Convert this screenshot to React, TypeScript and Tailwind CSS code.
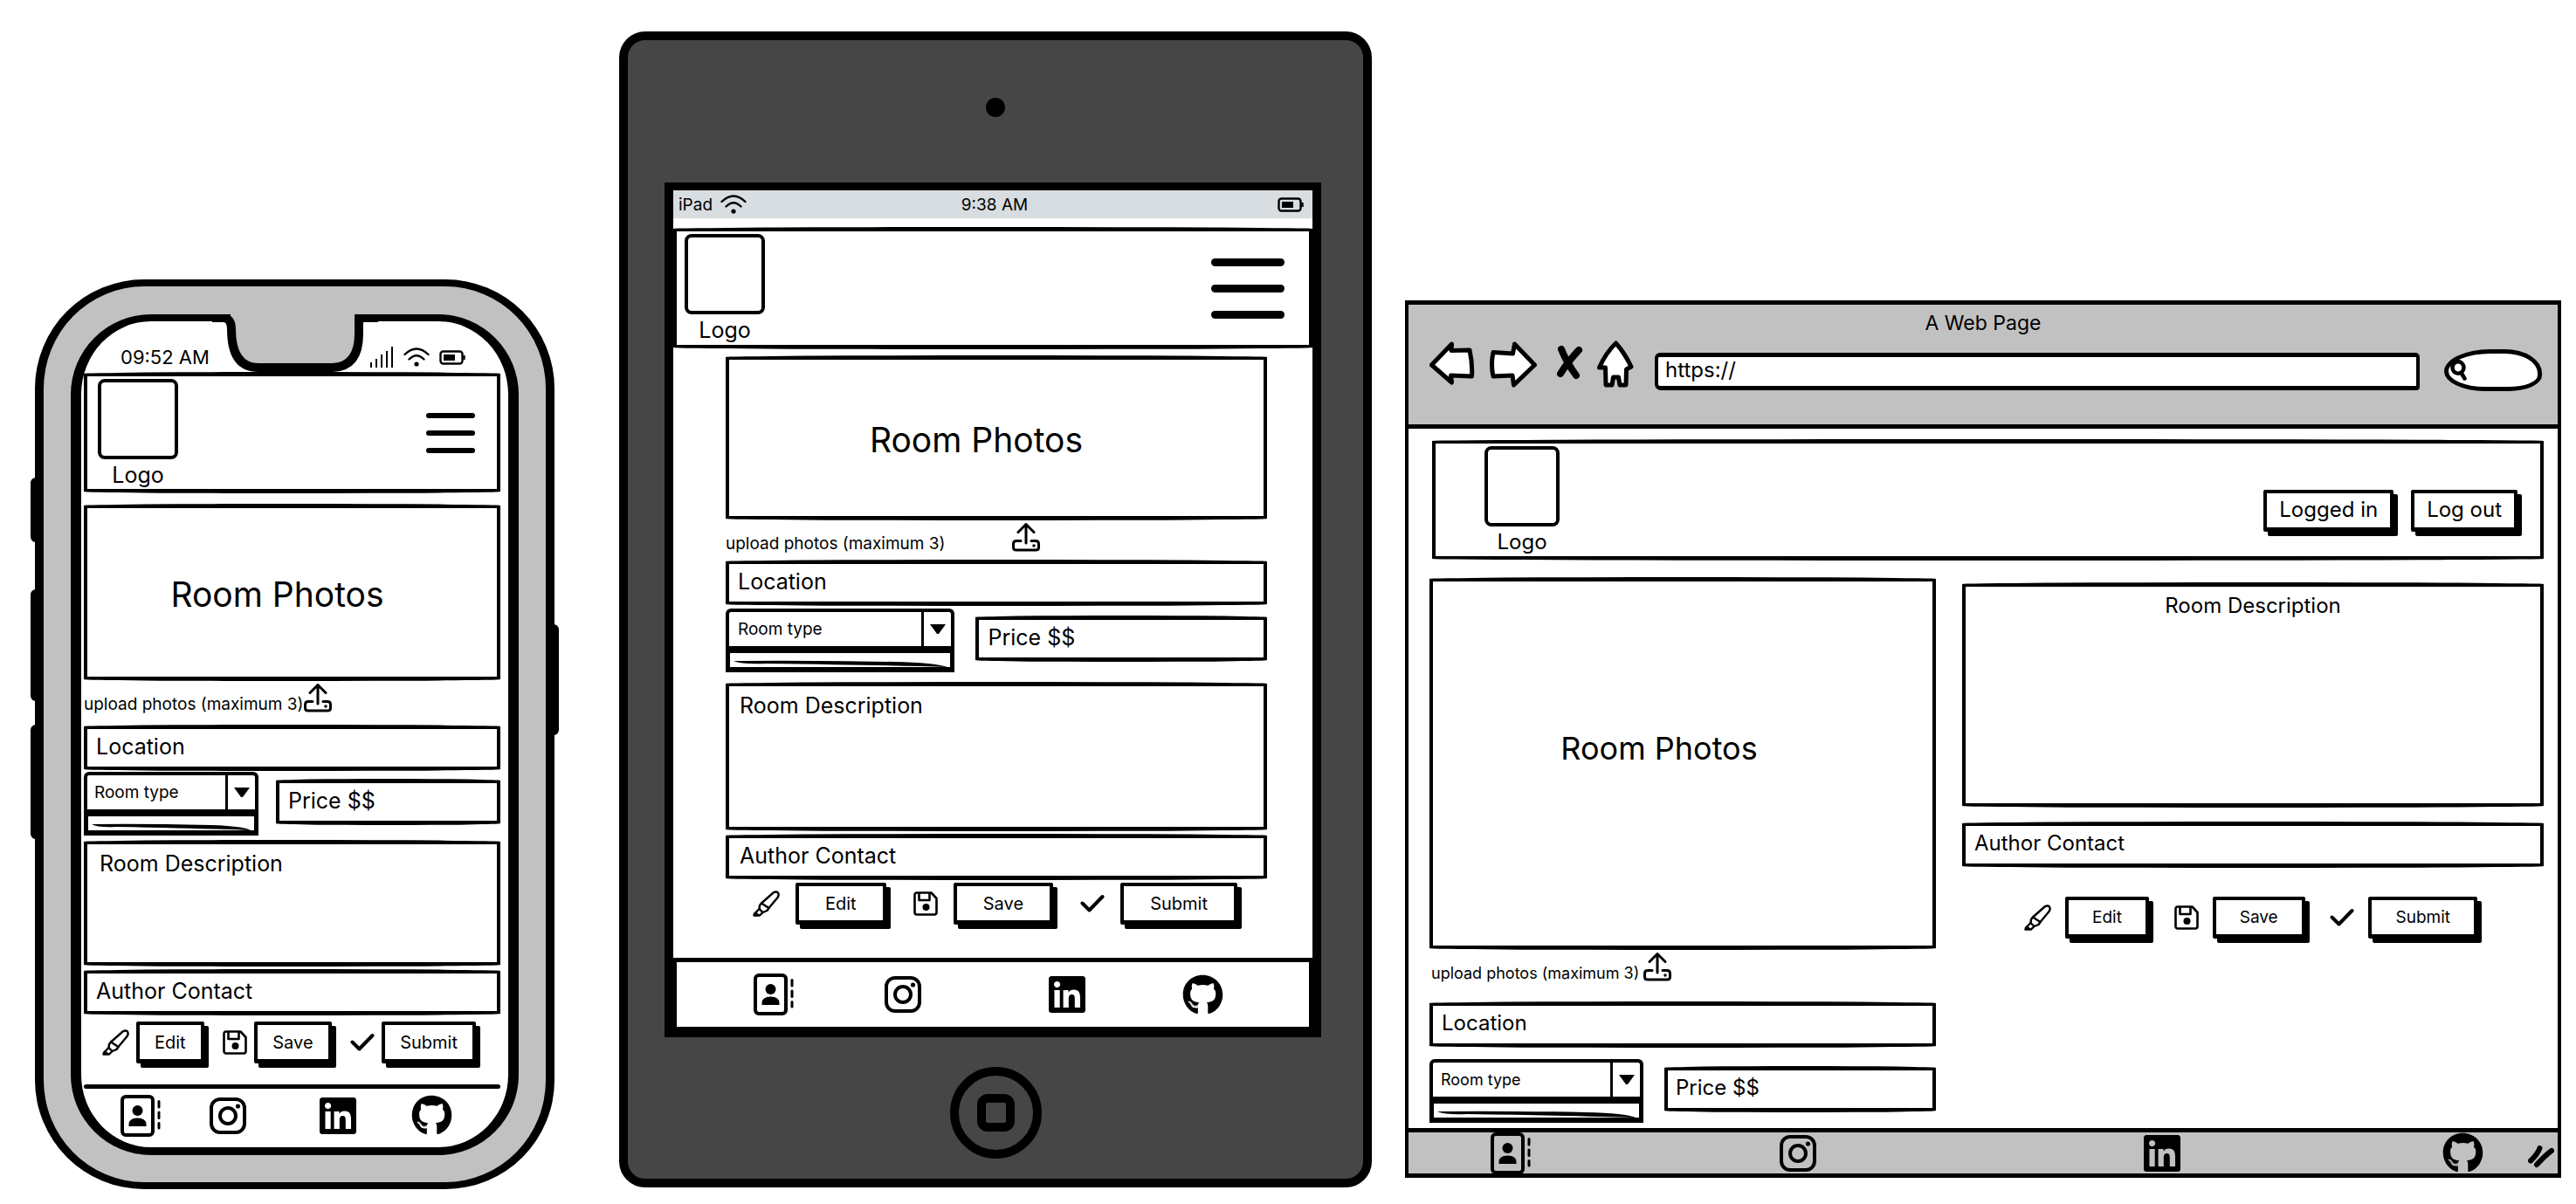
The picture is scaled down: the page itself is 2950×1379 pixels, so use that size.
import React from "react";
import { FaGithub, FaLinkedin } from "react-icons/fa";

/* Shared look of every pen-drawn rectangle */
const pen = "border-x-4 border-y-5 border-black rounded-[50%/2px] bg-white";

/* ---------- icons ---------- */

const UploadIcon = () => (
  <svg viewBox="0 0 32 33" className="h-[33px] w-8 shrink-0" fill="none" stroke="#000" strokeWidth="3" strokeLinecap="round" strokeLinejoin="round">
    <path d="M16 2V23M7 10.500L16 1.500L25 10.500" />
    <path d="M10 20.500H5Q1.500 20.500 1.500 24V28Q1.500 31 5 31H27Q30.500 31 30.500 28V24Q30.500 20.500 27 20.500H22" />
    <circle cx="25" cy="26" r="1" strokeWidth="1.500" fill="#000" />
  </svg>
);

const MarkerIcon = () => (
  <svg viewBox="0 0 31 30" className="h-[30px] w-[31px] shrink-0" fill="none" stroke="#000" strokeWidth="2.400" strokeLinecap="round" strokeLinejoin="round">
    <path d="M10 14.500L23.500 2.500Q27 0.500 29 2.500Q30.500 5 28.500 8L18.500 20Z" />
    <path d="M10 14.500L8 17L7.500 21L2 26.500L1.500 28.500L8 28.500L11.500 25L16.500 23L18.500 20" />
    <path d="M7.500 21L11.500 25" />
    <path d="M4.500 25.500L8 28.500H1.500Z" fill="#000" strokeWidth="1" />
  </svg>
);

const SaveIcon = () => (
  <svg viewBox="0 0 28 28" className="h-7 w-7 shrink-0" fill="none" stroke="#000" strokeWidth="2.600" strokeLinejoin="round">
    <path d="M4 1.500H20.500L26.500 8V24Q26.500 26.500 24 26.500H4Q1.500 26.500 1.500 24V4Q1.500 1.500 4 1.500Z" />
    <path d="M6.500 2V10H18.500V2" />
    <circle cx="14.500" cy="18" r="4" fill="#000" stroke="none" />
  </svg>
);

const CheckIcon = () => (
  <svg viewBox="0 0 28 22" className="h-[22px] w-7 shrink-0" fill="none" stroke="#000" strokeWidth="4" strokeLinecap="round" strokeLinejoin="round">
    <path d="M2.500 10.500L10.500 18.500L25.500 3" />
  </svg>
);

const ContactIcon = () => (
  <svg viewBox="0 0 46 48" className="h-12 w-[46px]" fill="none" stroke="#000" strokeLinecap="round">
    <rect x="2" y="2" width="35" height="44" rx="4" strokeWidth="4" />
    <circle cx="19.500" cy="18" r="6" fill="#000" stroke="none" />
    <path d="M9.500 36V34Q9.500 26.500 19.500 26.500Q29.500 26.500 29.500 34V36Z" fill="#000" stroke="none" />
    <path d="M44 7.500V14M44 20V26.500M44 32.500V38" strokeWidth="3" />
  </svg>
);

const InstagramIcon = () => (
  <svg viewBox="0 0 42 42" className="h-[42px] w-[42px]" fill="none" stroke="#000" strokeWidth="4">
    <rect x="2" y="2" width="38" height="38" rx="10" />
    <circle cx="21" cy="21" r="9" />
    <circle cx="32.500" cy="10" r="2.600" fill="#000" stroke="none" />
  </svg>
);

const WifiIcon = () => (
  <svg viewBox="0 0 30 22" className="h-[22px] w-[30px]" fill="none" stroke="#000" strokeWidth="2.400" strokeLinecap="round">
    <path d="M1.500 8Q15 -5 28.500 8M6.500 13.500Q15 5 23.500 13.500" />
    <circle cx="15" cy="19" r="2.600" fill="#000" stroke="none" />
  </svg>
);

const BatteryIcon = () => (
  <svg viewBox="0 0 30 17" className="h-[17px] w-[30px]" fill="none" stroke="#000" strokeWidth="2.400">
    <rect x="1.500" y="1.500" width="25" height="14" rx="3" />
    <rect x="5" y="5" width="13" height="7" fill="#000" stroke="none" />
    <path d="M28.500 6V11" />
  </svg>
);

const SignalIcon = () => (
  <svg viewBox="0 0 28 24" className="h-6 w-7" stroke="#000" strokeWidth="2">
    <path d="M2 18V24M8 14V24M14 9V24M20 5V24M26 0V24" />
  </svg>
);

/* ---------- shared parts ---------- */

function Logo({ className }: { className: string }) {
  return (
    <div className={`flex flex-col items-center self-start pt-[3px] ${className}`}>
      <div className="h-[92px] w-full rounded-lg border-4 border-black" />
      <span className="leading-9">Logo</span>
    </div>
  );
}

function MenuButton({ className, bar }: { className: string; bar: string }) {
  return (
    <button aria-label="Menu" className={`flex flex-col ${className}`}>
      <span className={`rounded-full bg-black ${bar}`} />
      <span className={`rounded-full bg-black ${bar}`} />
      <span className={`rounded-full bg-black ${bar}`} />
    </button>
  );
}

function Photos({ className, text = "text-[39px]" }: { className: string; text?: string }) {
  return (
    <div className={`${pen} flex items-center justify-center ${className}`}>
      <h2 className={`leading-none ${text}`}>Room Photos</h2>
    </div>
  );
}

function Upload({ className }: { className: string }) {
  return (
    <label className={`flex cursor-pointer items-start pt-[3px] ${className}`}>
      <span className="mt-3 whitespace-nowrap leading-6">upload photos (maximum 3)</span>
      <UploadIcon />
      <input type="file" multiple accept="image/*" className="sr-only" />
    </label>
  );
}

function Field({ label, className }: { label: string; className: string }) {
  return (
    <label className={`${pen} flex h-[53px] min-w-0 items-center gap-2 pb-1 ${className}`}>
      <span className="whitespace-nowrap">{label}</span>
      <input type="text" className="w-0 min-w-0 flex-1 bg-transparent outline-none" />
    </label>
  );
}

function RoomType({ pad, text }: { pad: string; text: string }) {
  return (
    <div className="min-w-0">
      <div className="relative h-[43px] rounded-t-md border-4 border-b-0 border-black">
        <select aria-label="Room type" className={`h-full w-full appearance-none bg-transparent outline-none ${pad} ${text}`}>
          <option>Room type</option>
        </select>
        <div className="pointer-events-none absolute inset-y-0 right-0 flex w-[34px] items-center justify-center border-l-3 border-black">
          <svg viewBox="0 0 18 11" className="h-[11px] w-[18px]">
            <path d="M0 0H18L10 11H8Z" />
          </svg>
        </div>
      </div>
      <div className="flex h-[30px] items-end border-x-5 border-t-8 border-b-6 border-black px-1">
        <svg viewBox="0 0 200 8" preserveAspectRatio="none" className="h-2 w-full">
          <path d="M0 1Q8 5 30 4Q150 6 200 8Q190 3 150 2Q60 0 0 1Z" />
        </svg>
      </div>
    </div>
  );
}

function Description({ className, center = false }: { className: string; center?: boolean }) {
  return (
    <label className={`${pen} flex flex-col pt-[6px] ${className}`}>
      <span className={center ? "text-center leading-8" : "leading-8"}>Room Description</span>
      <textarea className="min-h-0 flex-1 resize-none bg-transparent outline-none" />
    </label>
  );
}

function PushButton({ children, className }: { children: React.ReactNode; className: string }) {
  return (
    <button className={`h-12 whitespace-nowrap rounded-[2px] border-4 border-b-5 border-black bg-white shadow-[5px_5px_0_#000] ${className}`}>
      {children}
    </button>
  );
}

function Actions({ className, gap, button }: { className: string; gap: string; button: string }) {
  return (
    <div className={`flex justify-between ${className}`}>
      <div className={`flex items-center ${gap}`}>
        <MarkerIcon />
        <PushButton className={button}>Edit</PushButton>
      </div>
      <div className={`flex items-center ${gap}`}>
        <SaveIcon />
        <PushButton className={button}>Save</PushButton>
      </div>
      <div className={`flex items-center ${gap}`}>
        <CheckIcon />
        <PushButton className={button}>Submit</PushButton>
      </div>
    </div>
  );
}

function Social({ className }: { className: string }) {
  return (
    <nav aria-label="Social links" className={`grid items-center ${className}`}>
      <a href="#contact" aria-label="Contacts" className="justify-self-start"><ContactIcon /></a>
      <a href="#instagram" aria-label="Instagram" className="justify-self-start"><InstagramIcon /></a>
      <a href="#linkedin" aria-label="LinkedIn" className="justify-self-start"><FaLinkedin className="h-12 w-[42px]" /></a>
      <a href="#github" aria-label="GitHub" className="justify-self-start"><FaGithub className="h-[47px] w-[47px]" /></a>
    </nav>
  );
}

/* ---------- phone ---------- */

function Phone() {
  return (
    <section aria-label="Phone" className="relative mr-[69px] mt-[284px] min-w-0 px-[5px] text-[25px]">
      <span className="absolute left-0 top-[227px] h-[74px] w-3 rounded-l-md bg-black" />
      <span className="absolute left-0 top-[355px] h-[128px] w-3 rounded-l-md bg-black" />
      <span className="absolute left-0 top-[510px] h-[131px] w-3 rounded-l-md bg-black" />
      <span className="absolute right-0 top-[395px] h-[127px] w-3 rounded-r-md bg-black" />
      <div className="relative rounded-[125px] border-x-10 border-y-8 border-black bg-[#c1c1c1] px-[31px] pb-[31px] pt-8">
        <div className="relative rounded-[92px] border-x-12 border-t-8 border-b-9 border-black bg-white">
          <svg viewBox="0 0 190 66" className="absolute left-1/2 -top-2 h-[66px] w-[190px] -translate-x-1/2">
            <path d="M21 0H169V30Q168 62 142 62H50Q24 62 22 24Z" fill="#c1c1c1" />
            <path d="M0 4H12Q22 4 22 17Q22 61 53 61H138Q168 60 168 22V4H190" fill="none" stroke="#000" strokeWidth="10" />
            <path d="M12 -2H163V0H12Z" fill="#c1c1c1" />
          </svg>
          <header className="flex h-[58px] items-center justify-between pl-[45px] pr-[49px] pt-6">
            <span className="text-[22px]">09:52 AM</span>
            <span className="flex items-center gap-[11px]">
              <SignalIcon />
              <WifiIcon />
              <BatteryIcon />
            </span>
          </header>
          <div className="ml-[3px] mr-[9px]">
            <div className={`${pen} flex h-[139px] items-center justify-between pl-3 pr-[25px]`}>
              <Logo className="w-[92px]" />
              <MenuButton className="w-14 gap-[14px]" bar="h-[6px]" />
            </div>
            <Photos className="mt-3 h-[203px] pr-[34px] pt-1" />
            <Upload className="h-[50px] text-[19px]" />
            <Field label="Location" className="px-[10px]" />
            <div className="mt-px grid grid-cols-[200fr_257fr] gap-5">
              <RoomType pad="px-2" text="text-[19px]" />
              <Field label="Price $$" className="mt-2 px-[10px]" />
            </div>
            <Description className="mt-[5px] h-[145px] px-[14px]" />
            <Field label="Author Contact" className="mt-[3px] px-[10px]" />
            <Actions className="mt-[7px] pl-[21px] pr-7 text-[20px]" gap="gap-2" button="px-[17px]" />
            <div className="mt-6 h-[5px] rounded-full bg-black" />
            <Social className="h-[67px] grid-cols-[102fr_125fr_105fr_102fr] pb-[6px] pl-[42px]" />
          </div>
        </div>
      </div>
    </section>
  );
}

/* ---------- tablet ---------- */

function Tablet() {
  return (
    <section aria-label="Tablet" className="min-w-0 rounded-[30px] border-10 border-black bg-[#464646] pl-[42px] pr-12 text-[25px]">
      <div className="flex h-[163px] items-center justify-center pb-[10px] pl-[6px]">
        <span className="h-[22px] w-[22px] rounded-full bg-black" />
      </div>
      <div className="border-x-10 border-t-9 border-b-12 border-black bg-white">
        <div className="grid h-8 grid-cols-3 items-center bg-[#d7dde0] px-[6px] text-[19px] leading-none">
          <span className="flex items-center gap-[9px]">iPad<WifiIcon /></span>
          <span className="pl-1 text-center">9:38 AM</span>
          <span className="justify-self-end pr-1"><BatteryIcon /></span>
        </div>
        <div className={`${pen} mt-[10px] flex h-[140px] items-center justify-between pl-[9px] pr-7`}>
          <Logo className="w-[92px]" />
          <MenuButton className="w-[84px] gap-[21px]" bar="h-[9px]" />
        </div>
        <div className="ml-[60px] mr-[52px]">
          <Photos className="mt-[7px] h-[189px] pr-[46px] pt-1" />
          <Upload className="h-[45px] gap-[76px] text-[19px]" />
          <Field label="Location" className="px-[10px]" />
          <div className="mt-[3px] grid grid-cols-[262fr_333fr] gap-6">
            <RoomType pad="px-[10px]" text="text-[19px]" />
            <Field label="Price $$" className="mt-2 px-[10px]" />
          </div>
          <Description className="mt-[11px] h-[171px] px-3" />
          <Field label="Author Contact" className="mt-[3px] px-3" />
          <Actions className="mt-[3px] pl-[31px] pr-[34px] text-[20px]" gap="gap-[18px]" button="px-[30px]" />
        </div>
        <div className="mt-[38px] border-x-4 border-t-5 border-black">
          <Social className="h-[74px] grid-cols-[148fr_186fr_152fr_143fr] pl-[88px]" />
        </div>
      </div>
      <div className="flex h-[162px] items-center justify-center pl-[6px] pt-[10px]">
        <button aria-label="Home" className="flex h-[105px] w-[105px] items-center justify-center rounded-full border-10 border-black">
          <span className="h-[43px] w-[43px] rounded-xl border-10 border-black" />
        </button>
      </div>
    </section>
  );
}

/* ---------- desktop browser ---------- */

function Browser() {
  return (
    <section aria-label="Browser" className="ml-[38px] mt-[308px] min-w-0 border-x-4 border-y-5 border-black bg-white text-[24px]">
      <header className="h-[142px] border-b-5 border-black bg-[#c1c1c1] pt-[5px]">
        <h1 className="text-center text-[23px] leading-8">A Web Page</h1>
        <div className="flex items-start pl-6 pr-[18px]">
          <button aria-label="Back" className="mt-1">
            <svg viewBox="0 0 52 54" className="h-[54px] w-[52px]" fill="#fff" stroke="#000" strokeWidth="5" strokeLinejoin="round">
              <path d="M25.500 4L2.500 28L25.500 48L24.500 40L48.500 41Q49.500 27 46 11L25 11.500Z" />
            </svg>
          </button>
          <button aria-label="Forward" className="ml-[17px] mt-1">
            <svg viewBox="0 0 54 54" className="h-[54px] w-[54px]" fill="#fff" stroke="#000" strokeWidth="5" strokeLinejoin="round">
              <path d="M28.500 4L51.500 28L27.500 51L26 40L4 41Q1 27 4 13.500L26.500 15Z" />
            </svg>
          </button>
          <button aria-label="Stop" className="ml-[22px] mt-1">
            <svg viewBox="0 0 31 54" className="h-[54px] w-[31px]" fill="none" stroke="#000" strokeWidth="8" strokeLinecap="round">
              <path d="M6 10Q12 25 23 40M26 11Q13 25 5 38" />
            </svg>
          </button>
          <button aria-label="Home page" className="ml-4 mt-1">
            <svg viewBox="0 0 42 54" className="h-[54px] w-[42px]" fill="#fff" stroke="#000" strokeWidth="5" strokeLinejoin="round">
              <path d="M21.500 3Q32 15 39 30L33.500 33L33 51H26L24.500 42H18.500L17 51H10L9.500 31L2.500 31Q10 14 21.500 3Z" />
            </svg>
          </button>
          <input
            type="text"
            aria-label="Address"
            defaultValue="https://"
            className="ml-6 mt-[18px] h-[43px] min-w-0 flex-1 rounded-[6px_5px_4px_7px] border-x-4 border-y-5 border-black bg-white px-2 pb-1 outline-none"
          />
          <label className="ml-7 mt-[14px] flex h-[48px] w-[112px] items-center rounded-[50%_40%_36%_44%/56%_60%_40%_50%] border-5 border-black bg-white pl-[2px]">
            <svg viewBox="0 0 20 24" className="h-6 w-5 shrink-0" fill="none" stroke="#000" strokeWidth="4.500" strokeLinecap="round">
              <ellipse cx="9" cy="9" rx="6.500" ry="6.800" />
              <path d="M12.500 15L16.500 21.500" />
            </svg>
            <input type="search" aria-label="Search" className="w-0 min-w-0 flex-1 bg-transparent outline-none" />
          </label>
        </div>
      </header>
      <div className={`${pen} ml-[27px] mr-4 mt-3 flex h-[139px] items-center justify-between pl-14 pr-[26px]`}>
        <Logo className="w-[86px]" />
        <div className="flex gap-5 pt-6">
          <PushButton className="px-[14px]">Logged in</PushButton>
          <PushButton className="px-[14px]">Log out</PushButton>
        </div>
      </div>
      <div className="ml-6 mr-4 mt-[19px] grid grid-cols-[580fr_666fr] gap-[30px]">
        <div className="min-w-0">
          <Photos className="h-[427px] pb-9 pr-[54px]" text="text-[36px]" />
          <Upload className="h-[59px] gap-[5px] pl-[2px] text-[18px]" />
          <Field label="Location" className="px-[10px]" />
          <div className="mt-[13px] grid grid-cols-[245fr_311fr] gap-6">
            <RoomType pad="px-[9px]" text="text-[18px]" />
            <Field label="Price $$" className="mt-2 px-[9px]" />
          </div>
        </div>
        <div className="mt-[6px] min-w-0">
          <Description className="h-[258px]" center />
          <Field label="Author Contact" className="mt-4 px-[10px]" />
          <Actions className="mt-[33px] pl-[71px] pr-[76px] text-[19px]" gap="gap-4" button="px-[27px]" />
        </div>
      </div>
      <footer className="mt-[6px] flex h-[52px] items-center border-t-5 border-black bg-[#c1c1c1]">
        <Social className="flex-1 grid-cols-[332fr_417fr_343fr_98fr] pl-[94px]" />
        <svg viewBox="0 0 30 26" className="mr-1 mt-2 h-[26px] w-[30px]" fill="none" stroke="#000" strokeWidth="6" strokeLinecap="round">
          <path d="M13.500 3Q11 10 3 17.500M27 6Q20 11 10 22" />
        </svg>
      </footer>
    </section>
  );
}

export default function App() {
  return (
    <main className="grid min-h-screen grid-cols-[674fr_862fr_1362fr] items-start bg-white pl-[35px] pr-[17px] pt-9 font-['Inter',sans-serif] leading-8 text-black">
      <Phone />
      <Tablet />
      <Browser />
    </main>
  );
}
